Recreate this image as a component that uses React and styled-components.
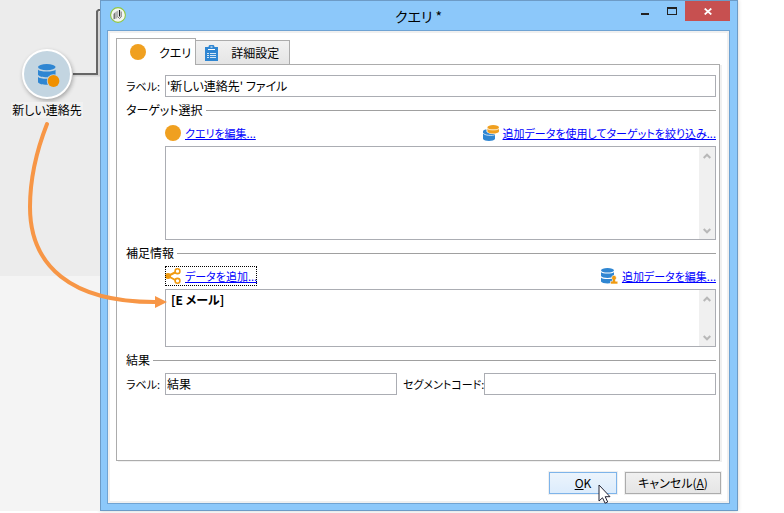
import { useState } from 'react'
import styled, { createGlobalStyle, css } from 'styled-components'

const GlobalStyle = createGlobalStyle`
  * {
    box-sizing: border-box;
  }
  body {
    margin: 0;
    background: #fff;
  }
  body, button, input, textarea {
    font-family: "Noto Sans CJK JP", "Noto Sans", sans-serif;
    font-size: 12px;
    font-feature-settings: "palt";
    color: #000;
  }
`;

const Page = styled.div`
  position: relative;
  display: grid;
  grid-template-columns: 100px minmax(0, 1fr) 46px;
  min-height: 100vh;
  padding-bottom: 2px;
`;

const Canvas = styled.aside`
  position: relative;
  padding-top: 48px;
  background: linear-gradient(#ececec 276px, #f4f4f4 276px);
`;

const Connector = styled.svg`
  position: absolute;
  top: 0;
  left: 0;
`;

const Node = styled.div`
  position: relative;
  display: flex;
  flex-direction: column;
  align-items: center;
  width: 94px;
  gap: 2px;
`;

const NodeCircle = styled.div`
  display: flex;
  align-items: center;
  justify-content: center;
  width: 50px;
  height: 50px;
  margin: 1px;
  padding: 2px 0 0 4px;
  border: 2px solid #fff;
  border-radius: 50%;
  background: #c3d5e1;
  box-shadow: 1px 2px 4px rgba(0, 0, 0, 0.3);
`;

const NodeLabel = styled.span`
  padding: 0 1px;
  line-height: 16px;
  background: #f1f1f1;
  white-space: nowrap;
`;

const Arrow = styled.svg`
  position: absolute;
  top: 0;
  left: 0;
  pointer-events: none;
`;

const Dialog = styled.form`
  display: flex;
  flex-direction: column;
  padding: 0 7px 6px 6px;
  border: 1px solid #6d9bc6;
  background: #8cc8fa;
  box-shadow: 0 0 4px rgba(0, 0, 0, 0.2);
`;

const TitleBar = styled.header`
  display: grid;
  grid-template-columns: 1fr auto 1fr;
  height: 29px;
`;

const Logo = styled.svg`
  margin: 6px 0 0 3px;
`;

const Title = styled.h1`
  margin: 0;
  font-size: 14px;
  font-weight: 400;
  line-height: 30px;
`;

const WindowButtons = styled.div`
  display: flex;
  justify-content: flex-end;
`;

const WindowButton = styled.button`
  display: flex;
  align-items: center;
  justify-content: center;
  width: ${({ $close }) => ($close ? '45px' : '27px')};
  height: 20px;
  padding: 0;
  border: 0;
  background: ${({ $close }) => ($close ? '#c75050' : 'transparent')};
`;

const Body = styled.main`
  display: flex;
  flex: 1;
  flex-direction: column;
  padding: 7px 7px 9px 6px;
  border: 1px solid #6fa3d3;
  background: #fff;
  box-shadow: inset 0 0 0 2px #f0f0f0;
`;

const Tabs = styled.div`
  display: flex;
  align-items: flex-end;
  height: 26px;
  padding-left: 2px;
`;

const Tab = styled.button`
  display: flex;
  align-items: center;
  gap: 13px;
  height: 24px;
  padding: 0 10px 0 9px;
  border: 1px solid #acacac;
  border-bottom: 0;
  background: linear-gradient(#f1f1f1, #e5e5e5);
  ${({ $active }) => $active && css`
    height: 27px;
    margin: 0 -1px -1px 0;
    padding: 0 4px 0 13px;
    background: #fff;
    z-index: 1;
  `}
`;

const Panel = styled.div`
  display: flex;
  flex: 1;
  flex-direction: column;
  gap: 4px;
  margin: 0 2px 0 2px;
  padding: 10px 3px 10px 9px;
  border: 1px solid #acacac;
  box-shadow: 2px 1px 0 #f0f0f0;
`;

const Row = styled.div`
  display: flex;
  align-items: center;
`;

const Label = styled.label`
  flex: none;
  width: ${({ $wide }) => ($wide ? '87px' : '39px')};
  padding-left: ${({ $wide }) => ($wide ? '6px' : '0')};
  font-size: 11px;
  line-height: 18px;
  white-space: nowrap;
`;

const Field = styled.input`
  flex: 1;
  min-width: 0;
  height: 22px;
  padding: 0 1px 2px;
  border: 1px solid #abadb3;
  background: #fff;
  outline: 0;
`;

const Section = styled.fieldset`
  min-width: 0;
  margin: 0;
  padding: 0;
  border: 0;
`;

const Legend = styled.legend`
  display: flex;
  align-items: center;
  gap: 3px;
  width: 100%;
  height: 18px;
  margin-bottom: 4px;
  padding: 0;
  line-height: 18px;
  &::after {
    content: "";
    flex: 1;
    height: 1px;
    background: #a0a0a0;
  }
`;

const Indent = styled.div`
  display: flex;
  flex-direction: column;
  gap: 3px;
  padding-left: 39px;
`;

const Links = styled.div`
  display: flex;
  justify-content: space-between;
  height: 20px;
`;

const ActionLink = styled.a`
  display: flex;
  align-items: center;
  gap: 4px;
  color: #00f;
  font-size: 11px;
  line-height: 18px;
  text-decoration: none;
  white-space: nowrap;
  outline: ${({ $focused }) => ($focused ? '1px dotted #000' : '0')};
  outline-offset: -1px;
  span {
    text-decoration: underline;
  }
`;

const ListBox = styled.div`
  display: flex;
  height: ${({ $tall }) => ($tall ? '94px' : '58px')};
  border: 1px solid #abadb3;
`;

const ListText = styled.textarea`
  flex: 1;
  min-width: 0;
  padding: 0 5px;
  border: 0;
  background: transparent;
  font-weight: 700;
  line-height: 20px;
  resize: none;
  outline: 0;
  overflow: hidden;
`;

const ScrollRail = styled.div`
  display: flex;
  flex-direction: column;
  justify-content: space-between;
  width: 16px;
  background: #f0f0f0;
`;

const ScrollButton = styled.button`
  display: flex;
  align-items: center;
  justify-content: center;
  height: 17px;
  padding: 0;
  border: 0;
  background: transparent;
`;

const Footer = styled.footer`
  display: flex;
  justify-content: flex-end;
  gap: 8px;
  padding: 11px 1px 0;
`;

const Button = styled.button`
  position: relative;
  width: ${({ $primary }) => ($primary ? '68px' : '96px')};
  height: 22px;
  padding: 0;
  border: 1px solid ${({ $primary }) => ($primary ? '#7eb4ea' : '#acacac')};
  background: ${({ $primary }) => ($primary
    ? 'linear-gradient(#ecf4fc, #dcecfc)'
    : 'linear-gradient(#f0f0f0, #e5e5e5)')};
  box-shadow: 0 0 0 1px #f0f0f0;
  line-height: 18px;
`;

const Cursor = styled.svg`
  position: absolute;
  top: 11px;
  left: 48px;
`;

const DotIcon = () => (
  <svg width="16" height="16" viewBox="0 0 16 16">
    <circle cx="8" cy="8" r="8" fill="#f0a020" />
  </svg>
)

const ClipboardIcon = () => (
  <svg width="13" height="16" viewBox="0 0 13 16">
    <path fill="#2f86d2" d="M0 2h3.500a3 2.400 0 0 1 6 0H13v14H0z" />
    <path fill="#fff" d="M3 4h7v1H3zM5.500 1.500h2v1h-2z" />
    <path fill="#d5e7f6" d="M2 8h2v1H2zM5 8h6v1H5zM2 10h2v1H2zM5 10h6v1H5zM2 12h2v1H2zM5 12h6v1H5z" />
  </svg>
)

const Disks = () => (
  <g fill="#2f86d2">
    <ellipse cx="6.500" cy="2.300" rx="6.500" ry="2.300" />
    <path d="M0 4c1 2 12 2 13 0v4c-1 2.500-12 2.500-13 0z" />
    <path d="M0 9.500c1 2 12 2 13 0v4c-1 2.500-12 2.500-13 0z" />
  </g>
)

const FilterDataIcon = () => (
  <svg width="16" height="16" viewBox="0 0 16 16">
    <path fill="#2f86d2" d="M0 6.500C0 5 2 4.500 3.500 4.500v2.300c1.500 2 5 2.400 8.500 2.200V14c-1 2.500-11 2.500-12 0z" />
    <ellipse cx="10.200" cy="2.300" rx="5.800" ry="2.300" fill="#f0a020" />
    <path fill="#f0a020" d="M4.400 3.500c1 2 10.600 2 11.600 0v3c-1 2.700-10.600 2.700-11.600 0z" />
    <path fill="none" stroke="#fbe0ae" strokeWidth=".8" d="M4.400 3.500c1 2 10.600 2 11.600 0" />
    <path fill="none" stroke="#fff" strokeWidth=".7" d="M0 8c1 2.500 10 3.200 12 1.500" />
  </svg>
)

const ShareIcon = () => (
  <svg width="16" height="16" viewBox="0 0 16 16">
    <path d="M3 8l9-4.500M3 8l9 5" stroke="#f09a10" strokeWidth="2" />
    <circle cx="3" cy="8" r="3" fill="#f09a10" />
    <circle cx="12.500" cy="3.200" r="2.400" fill="#fff" stroke="#f09a10" strokeWidth="1.600" />
    <circle cx="12.500" cy="12.800" r="2.400" fill="#fff" stroke="#f09a10" strokeWidth="1.600" />
  </svg>
)

const EditDataIcon = () => (
  <svg width="17" height="16" viewBox="0 0 17 16">
    <Disks />
    <path fill="#f09a10" stroke="#fff" strokeWidth=".6" d="M13 7.300a2.500 2.500 0 0 1 1.500 4.400v1.500h2.300V16H9.500v-2.800h2v-1.500A2.500 2.500 0 0 1 13 7.300z" />
  </svg>
)

const NodeIcon = () => (
  <svg width="22" height="23" viewBox="0 0 22 23">
    <g transform="scale(1.350)">
      <Disks />
    </g>
    <circle cx="15.500" cy="17" r="6.700" fill="#c3d5e1" />
    <circle cx="15.500" cy="17" r="5.900" fill="#f09000" />
  </svg>
)

const Chevron = ({ down }) => (
  <svg width="8" height="6" viewBox="0 0 8 6">
    <path d={down ? 'M.7 1L4 4.300 7.300 1' : 'M.7 5L4 1.700 7.300 5'} fill="none" stroke="#b8b8b8" strokeWidth="2" />
  </svg>
)

const List = ({ label, tall, defaultValue }) => (
  <ListBox $tall={tall}>
    <ListText aria-label={label} defaultValue={defaultValue} spellCheck={false} />
    <ScrollRail>
      <ScrollButton type="button" aria-label="上へ"><Chevron /></ScrollButton>
      <ScrollButton type="button" aria-label="下へ"><Chevron down /></ScrollButton>
    </ScrollRail>
  </ListBox>
)

const App = () => {
  const [tab, setTab] = useState('query')

  return (
    <Page>
      <GlobalStyle />
      <Canvas>
        <Connector width="100" height="90">
          <path d="M73 75.500H99V12" fill="none" stroke="#d4d4d4" strokeWidth="2" />
          <path d="M73 74H97V11.500L98.500 10H100" fill="none" stroke="#666" strokeWidth="2" />
        </Connector>
        <Node>
          <NodeCircle><NodeIcon /></NodeCircle>
          <NodeLabel>新しい連絡先</NodeLabel>
        </Node>
      </Canvas>

      <Dialog onSubmit={(e) => e.preventDefault()}>
        <TitleBar>
          <Logo width="16" height="16" viewBox="0 0 16 16">
            <circle cx="8" cy="8" r="7.400" fill="#f4f6f2" stroke="#8fc640" strokeWidth="1.100" />
            <path d="M3.500 7L5.500 5v6.500L3.500 12.500z" fill="#777" />
            <path d="M5.500 5l2.500-1.500v5l-1 3-1.500 0z" fill="#b5b5b5" />
            <path d="M9.500 3v6.500" fill="none" stroke="#222" strokeWidth="1.200" />
            <path d="M11.200 4.500V10l-1.700 1.500L7.500 9.500" fill="none" stroke="#777" strokeWidth="1" />
          </Logo>
          <Title>クエリ *</Title>
          <WindowButtons>
            <WindowButton type="button" aria-label="最小化">
              <svg width="8" height="8"><path d="M0 6h8v2H0z" fill="#222" /></svg>
            </WindowButton>
            <WindowButton type="button" aria-label="最大化">
              <svg width="10" height="8"><path fillRule="evenodd" d="M0 0h10v8H0zM1 2v5h8V2z" fill="#222" /></svg>
            </WindowButton>
            <WindowButton type="button" aria-label="閉じる" $close>
              <svg width="8" height="7"><path d="M.7.500l6.600 6M7.300.500l-6.600 6" stroke="#fff" strokeWidth="1.700" /></svg>
            </WindowButton>
          </WindowButtons>
        </TitleBar>

        <Body>
          <Tabs role="tablist">
            <Tab type="button" role="tab" aria-selected={tab === 'query'} $active={tab === 'query'} onClick={() => setTab('query')}>
              <DotIcon />
              クエリ
            </Tab>
            <Tab type="button" role="tab" aria-selected={tab === 'advanced'} $active={tab === 'advanced'} onClick={() => setTab('advanced')}>
              <ClipboardIcon />
              詳細設定
            </Tab>
          </Tabs>

          <Panel role="tabpanel">
            <Row>
              <Label htmlFor="label">ラベル:</Label>
              <Field id="label" defaultValue="'新しい連絡先' ファイル" />
            </Row>

            <Section>
              <Legend>ターゲット選択</Legend>
              <Indent>
                <Links>
                  <ActionLink href="#edit-query"><DotIcon /><span>クエリを編集...</span></ActionLink>
                  <ActionLink href="#refine"><FilterDataIcon /><span>追加データを使用してターゲットを絞り込み...</span></ActionLink>
                </Links>
                <List label="ターゲット選択" tall />
              </Indent>
            </Section>

            <Section>
              <Legend>補足情報</Legend>
              <Indent>
                <Links>
                  <ActionLink href="#add-data" $focused><ShareIcon /><span>データを追加...</span></ActionLink>
                  <ActionLink href="#edit-data"><EditDataIcon /><span>追加データを編集...</span></ActionLink>
                </Links>
                <List label="補足情報" defaultValue="[E メール]" />
              </Indent>
            </Section>

            <Section>
              <Legend>結果</Legend>
              <Row>
                <Label htmlFor="result">ラベル:</Label>
                <Field id="result" defaultValue="結果" />
                <Label htmlFor="segment" $wide>セグメントコード:</Label>
                <Field id="segment" />
              </Row>
            </Section>
          </Panel>

          <Footer>
            <Button type="submit" $primary>
              <u>O</u>K
              <Cursor width="13" height="20" viewBox="0 0 13 20">
                <path d="M1 1v16l3.500-3.200 2.600 5.400 2.600-1.200-2.500-5.300H12z" fill="#fff" stroke="#223" strokeWidth="1" />
              </Cursor>
            </Button>
            <Button type="button">キャンセル(<u>A</u>)</Button>
          </Footer>
        </Body>
      </Dialog>

      <Arrow width="170" height="310">
        <path d="M47 124C36 152 30 180 30 207C30 265 70 303 158 302" fill="none" stroke="#f79646" strokeWidth="4" strokeLinecap="round" />
        <path d="M155 296l12 6-12 6z" fill="#f79646" />
      </Arrow>
    </Page>
  )
}

export default App
